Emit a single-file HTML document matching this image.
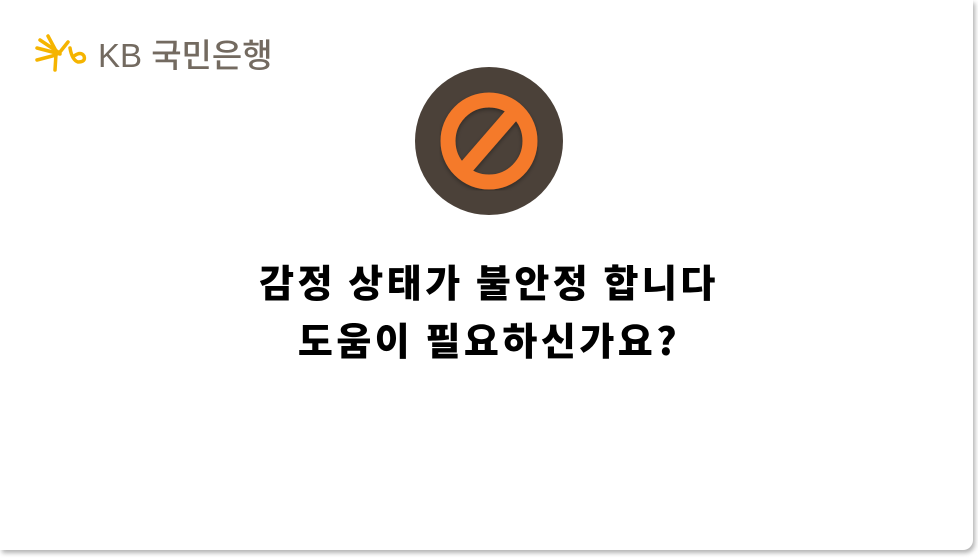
<!DOCTYPE html>
<html><head><meta charset="utf-8"><style>
html,body{margin:0;padding:0;width:978px;height:558px;background:#fff;overflow:hidden}
.card{position:absolute;left:0;top:0;width:973px;height:550px;background:#fff;border-radius:0 0 10px 0;box-shadow:2px 3px 5px rgba(0,0,0,.3)}
.logo{position:absolute;left:34px;top:34px;}
.kb{position:absolute;left:98px;top:29px;font:500 33px "Liberation Sans","Noto Sans CJK KR",sans-serif;color:#736a60;letter-spacing:0px}
.circ{position:absolute;left:415px;top:67px;width:148px;height:148px;border-radius:50%;background:#4b4139}
.t{position:absolute;left:0;width:978px;text-align:center;font:900 38px "Noto Sans CJK KR",sans-serif;color:#000;letter-spacing:3.5px}
</style></head><body>
<div class="card">
<svg class="logo" width="60" height="40" viewBox="0 0 60 40">
<g stroke="#f5b400" stroke-width="3.5" stroke-linecap="round" fill="none">
<path d="M3 14 L26 20"/><path d="M6 6 L24 18"/><path d="M14 2 L22 17"/><path d="M3 26 L22 21"/><path d="M22 20 L21 36"/><path d="M26 18 L34 8"/>
<path d="M36 14 Q38 26 44 28 Q52 28 50 22 Q47 17 40 22"/>
</g></svg>
<div class="kb">KB 국민은행</div>
<div class="circ"><svg width="148" height="148" viewBox="0 0 148 148">
<defs><filter id="s"><feDropShadow dx="0" dy="2" stdDeviation="2" flood-color="#000" flood-opacity=".35"/></filter></defs>
<g filter="url(#s)" stroke="#f57a2a" fill="none" stroke-width="15">
<circle cx="74" cy="74" r="41"/><path d="M100 44 L48 104"/></g></svg></div>
<div class="t" style="top:253px">감정 상태가 불안정 합니다</div>
<div class="t" style="top:311px">도움이 필요하신가요?</div>
</div>
</body></html>
